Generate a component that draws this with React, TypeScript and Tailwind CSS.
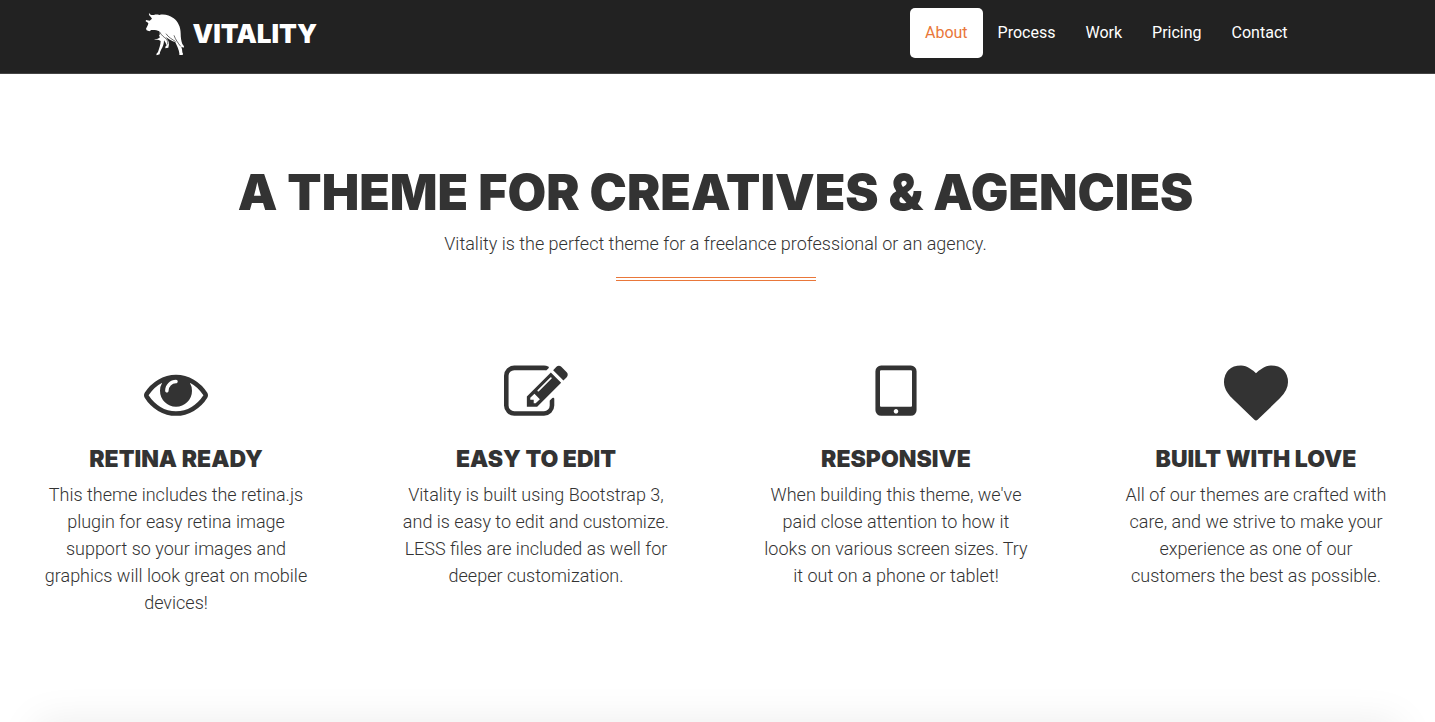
import React from "react";

const navItems = ["About", "Process", "Work", "Pricing", "Contact"];

const features = [
  {
    title: "Retina Ready",
    text: "This theme includes the retina.js plugin for easy retina image support so your images and graphics will look great on mobile devices!",
    icon: "M1664 960q-152-236-381-353 61 104 61 225 0 185-131.5 316.5t-316.5 131.5-316.5-131.5-131.5-316.5q0-121 61-225-229 117-381 353 133 205 333.5 326.5t434.5 121.5 434.5-121.5 333.5-326.5zm-720-384q0-20-14-34t-34-14q-125 0-214.5 89.5t-89.5 214.5q0 20 14 34t34 14 34-14 14-34q0-86 61-147t147-61q20 0 34-14t14-34zm848 384q0 34-20 69-140 230-376.5 368.5t-499.5 138.5-499.5-139-376.5-368q-20-35-20-69t20-69q140-229 376.5-368t499.5-139 499.5 139 376.5 368q20 35 20 69z",
  },
  {
    title: "Easy to Edit",
    text: "Vitality is built using Bootstrap 3, and is easy to edit and customize. LESS files are included as well for deeper customization.",
    icon: "M888 1184l116-116-152-152-116 116v56h96v96h56zm440-720q-16-16-33 1l-350 350q-17 17-1 33t33-1l350-350q17-17 1-33zm80 594v190q0 119-84.5 203.5t-203.5 84.5h-832q-119 0-203.5-84.5t-84.5-203.5v-832q0-119 84.5-203.5t203.5-84.5h832q63 0 117 25 15 7 18 23 3 17-9 29l-49 49q-14 14-32 8-23-6-45-6h-832q-66 0-113 47t-47 113v832q0 66 47 113t113 47h832q66 0 113-47t47-113v-126q0-13 9-22l64-64q15-15 35-7t20 29zm-96-738l288 288-672 672h-288v-288zm444 132l-92 92-288-288 92-92q28-28 68-28t68 28l152 152q28 28 28 68t-28 68z",
  },
  {
    title: "Responsive",
    text: "When building this theme, we've paid close attention to how it looks on various screen sizes. Try it out on a phone or tablet!",
    icon: "M960 1408q0-26-19-45t-45-19-45 19-19 45 19 45 45 19 45-19 19-45zm384-160v-960q0-13-9.5-22.5t-22.5-9.5h-832q-13 0-22.5 9.5t-9.5 22.5v960q0 13 9.5 22.5t22.5 9.5h832q13 0 22.5-9.5t9.5-22.5zm128-960v1088q0 66-47 113t-113 47h-832q-66 0-113-47t-47-113v-1088q0-66 47-113t113-47h832q66 0 113 47t47 113z",
  },
  {
    title: "Built with Love",
    text: "All of our themes are crafted with care, and we strive to make your experience as one of our customers the best as possible.",
    icon: "M896 1664q-26 0-44-18l-624-602q-10-8-27.5-26t-55.5-65.5-68-97.5-53.5-121-23.5-138q0-220 127-344t351-124q62 0 126.5 21.5t120 58 95.5 68.5 76 68q36-36 76-68t95.5-68.5 120-58 126.5-21.5q224 0 351 124t127 344q0 221-229 450l-623 600q-18 18-44 18z",
  },
];

function BullLogo() {
  return (
    <svg viewBox="17 20 120 132" className="h-11 w-10" fill="#fff" aria-hidden="true">
      <path d="M29 22C31 28 36 30 44 29C50 27 55 28 60 29C74 25 91 30 103 39C116 49 124 65 124 84C124 98 126 108 129 116L134 123L133 127L126 124C128 130 129 136 129 141L131 145L130 149H120L120 144C119 133 112 121 108 111C98 108 88 101 79 95C84 103 90 108 89 117L87 127L78 129V124L82 120C80 114 77 109 74 105C74 115 71 124 66 132L62 141L61 147L52 150L51 146L56 140C60 128 64 117 64 107C57 102 49 104 44 101C50 102 57 101 62 96L59 91C63 88 61 84 60 78C53 74 44 73 36 74L30 78L22 75L20 70L26 58L27 53L19 48L20 44L31 46L38 40L34 34C30 31 28 27 29 22Z" />
      <path d="M61 80C66 90 74 95 80 100C85 105 86 111 85 117M80 85C87 96 99 102 109 109M104 90C108 102 116 113 124 123" fill="none" stroke="#222" strokeWidth="2" />
    </svg>
  );
}

export default function App() {
  return (
    <div className="bg-white font-['Roboto',sans-serif] text-[#333]">
      <header className="border-b border-[#444] bg-[#222]">
        <div className="mx-auto flex h-[73px] max-w-[1170px] items-start justify-between pl-3">
          <a href="#" className="mt-3 flex items-center gap-2 text-white">
            <BullLogo />
            <span className="font-['Inter',sans-serif] text-[26px] leading-10 font-black">VITALITY</span>
          </a>
          <nav className="mt-2 flex">
            {navItems.map((item, i) => (
              <a
                key={item}
                href={"#" + item.toLowerCase()}
                className={
                  i === 0
                    ? "rounded-[5px] bg-white px-[15px] py-3 text-base leading-[26px] text-[#e9773a]"
                    : "rounded-[5px] px-[15px] py-3 text-base leading-[26px] text-white"
                }
              >
                {item}
              </a>
            ))}
          </nav>
        </div>
      </header>
      <main className="overflow-x-clip">
        <section id="about" className="pt-[90px] pr-1 text-center">
          <h1 className="font-['Inter',sans-serif] text-[50px] leading-14 font-black uppercase">
            A Theme for Creatives &amp; Agencies
          </h1>
          <p className="mt-2.5 text-lg leading-[27px] font-light">
            Vitality is the perfect theme for a freelance professional or an agency.
          </p>
          <hr className="mx-auto mt-5 h-1 w-[200px] border-0 border-y border-[#e9773a]" />
          <div className="-mr-[5px] -ml-1 mt-20 grid grid-cols-4">
            {features.map((f) => (
              <div key={f.title} className="px-11">
                <svg viewBox="0 0 1792 1792" className="mx-auto size-16" fill="currentColor" aria-hidden="true">
                  <path d={f.icon} />
                </svg>
                <h2 className="mt-5 font-['Inter',sans-serif] text-[23px] leading-7 font-black uppercase">{f.title}</h2>
                <p className="mt-2 text-lg leading-[27px] font-light">{f.text}</p>
              </div>
            ))}
          </div>
        </section>
        <div className="mt-[58px] h-12 overflow-hidden px-9 pt-12">
          <div className="h-20 shadow-[0_0_40px_rgba(0,0,0,0.08)]" />
        </div>
      </main>
    </div>
  );
}
